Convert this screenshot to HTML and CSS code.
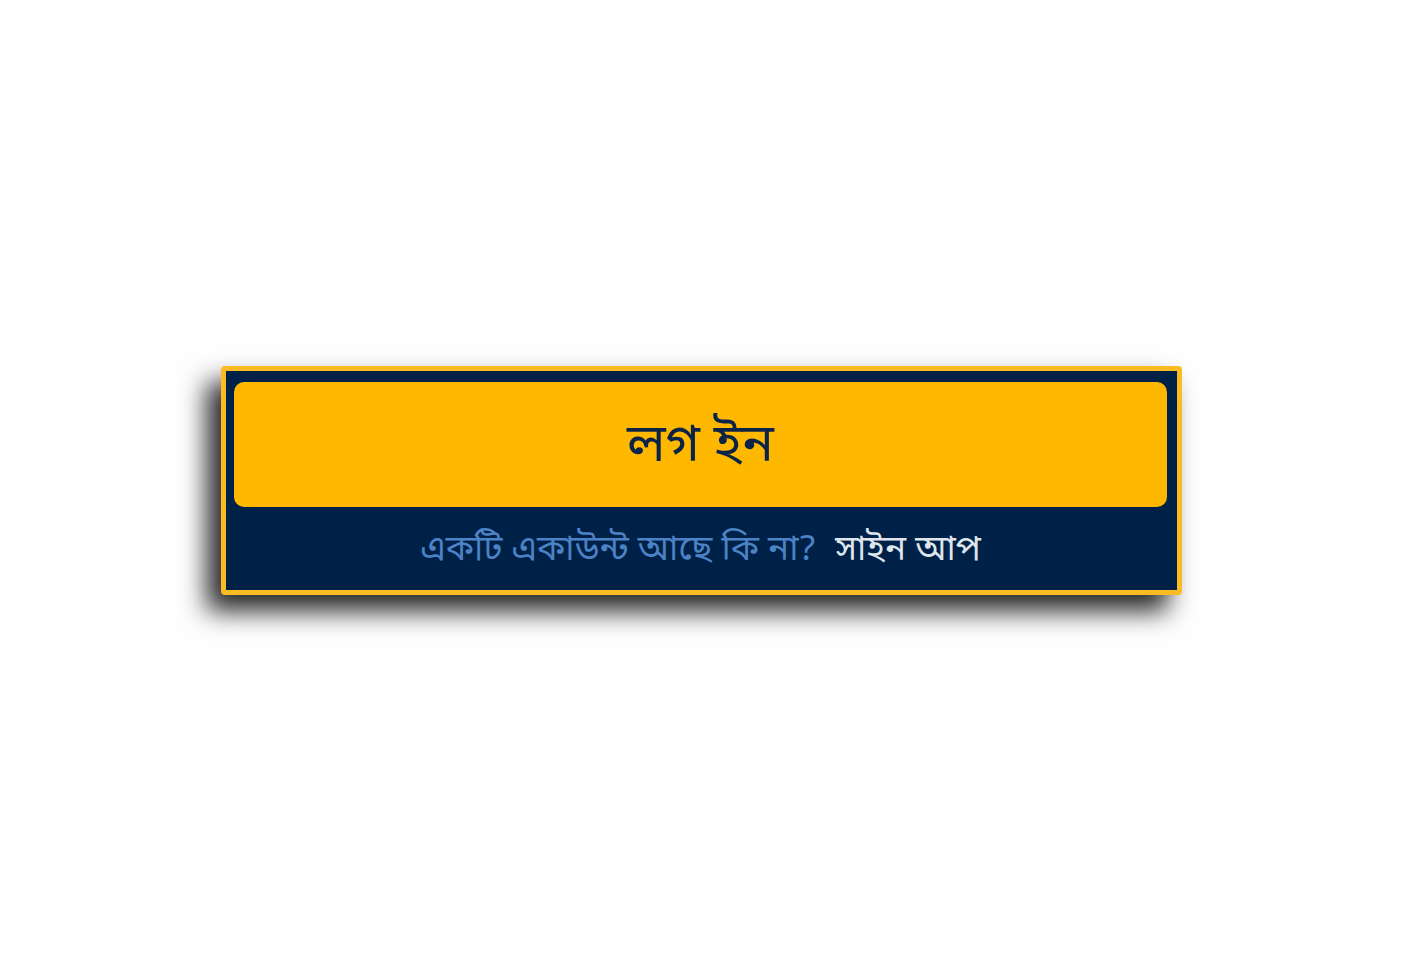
FILE: index.html
```html
<!DOCTYPE html>
<html lang="bn">

<head>
  <meta charset="UTF-8">
  <meta name="viewport" content="width=device-width, initial-scale=1.0">
  <title>লগ ইন</title>
  <link rel="stylesheet" href="styles.css">
</head>

<body>
  <div class="login-card">
    <button class="login-btn">লগ ইন</button>

    <p class="signup-line">
      <span class="signup-question">একটি একাউন্ট আছে কি না?</span>
      <a href="#" class="signup-link">সাইন আপ</a>
    </p>
  </div>
</body>

</html>
```

FILE: styles.css
```css
body {
  margin: 0;
  height: 961px;
  background-color: #fefefe;
  font-family: "Noto Sans Bengali", "Lohit Bengali", "Noto Serif Bengali", "FreeSans", sans-serif;
  display: flex;
  justify-content: center;
  align-items: flex-start;
}

.login-card {
  box-sizing: border-box;
  width: 961px;
  height: 229px;
  margin-top: 366px;
  margin-left: -1px;
  padding: 11px 10px 0 8px;
  background-color: #002147;
  border: 5px solid #fbbc23;
  border-radius: 4px;
  box-shadow: -14px 16px 26px rgba(0, 0, 0, 0.85);
}

.login-btn {
  display: block;
  width: 100%;
  height: 125px;
  padding: 6px 0 0;
  border: none;
  border-radius: 10px;
  background-color: #ffb800;
  color: #0b2347;
  font-family: inherit;
  font-size: 53px;
  line-height: 1;
  cursor: pointer;
}

.signup-line {
  margin: 23px 0 0;
  text-align: center;
  font-size: 35px;
  line-height: 1.2;
}

.signup-question {
  color: #4c82c6;
}

.signup-link {
  margin-left: 10px;
  color: #dfe5ec;
  text-decoration: none;
}
```
